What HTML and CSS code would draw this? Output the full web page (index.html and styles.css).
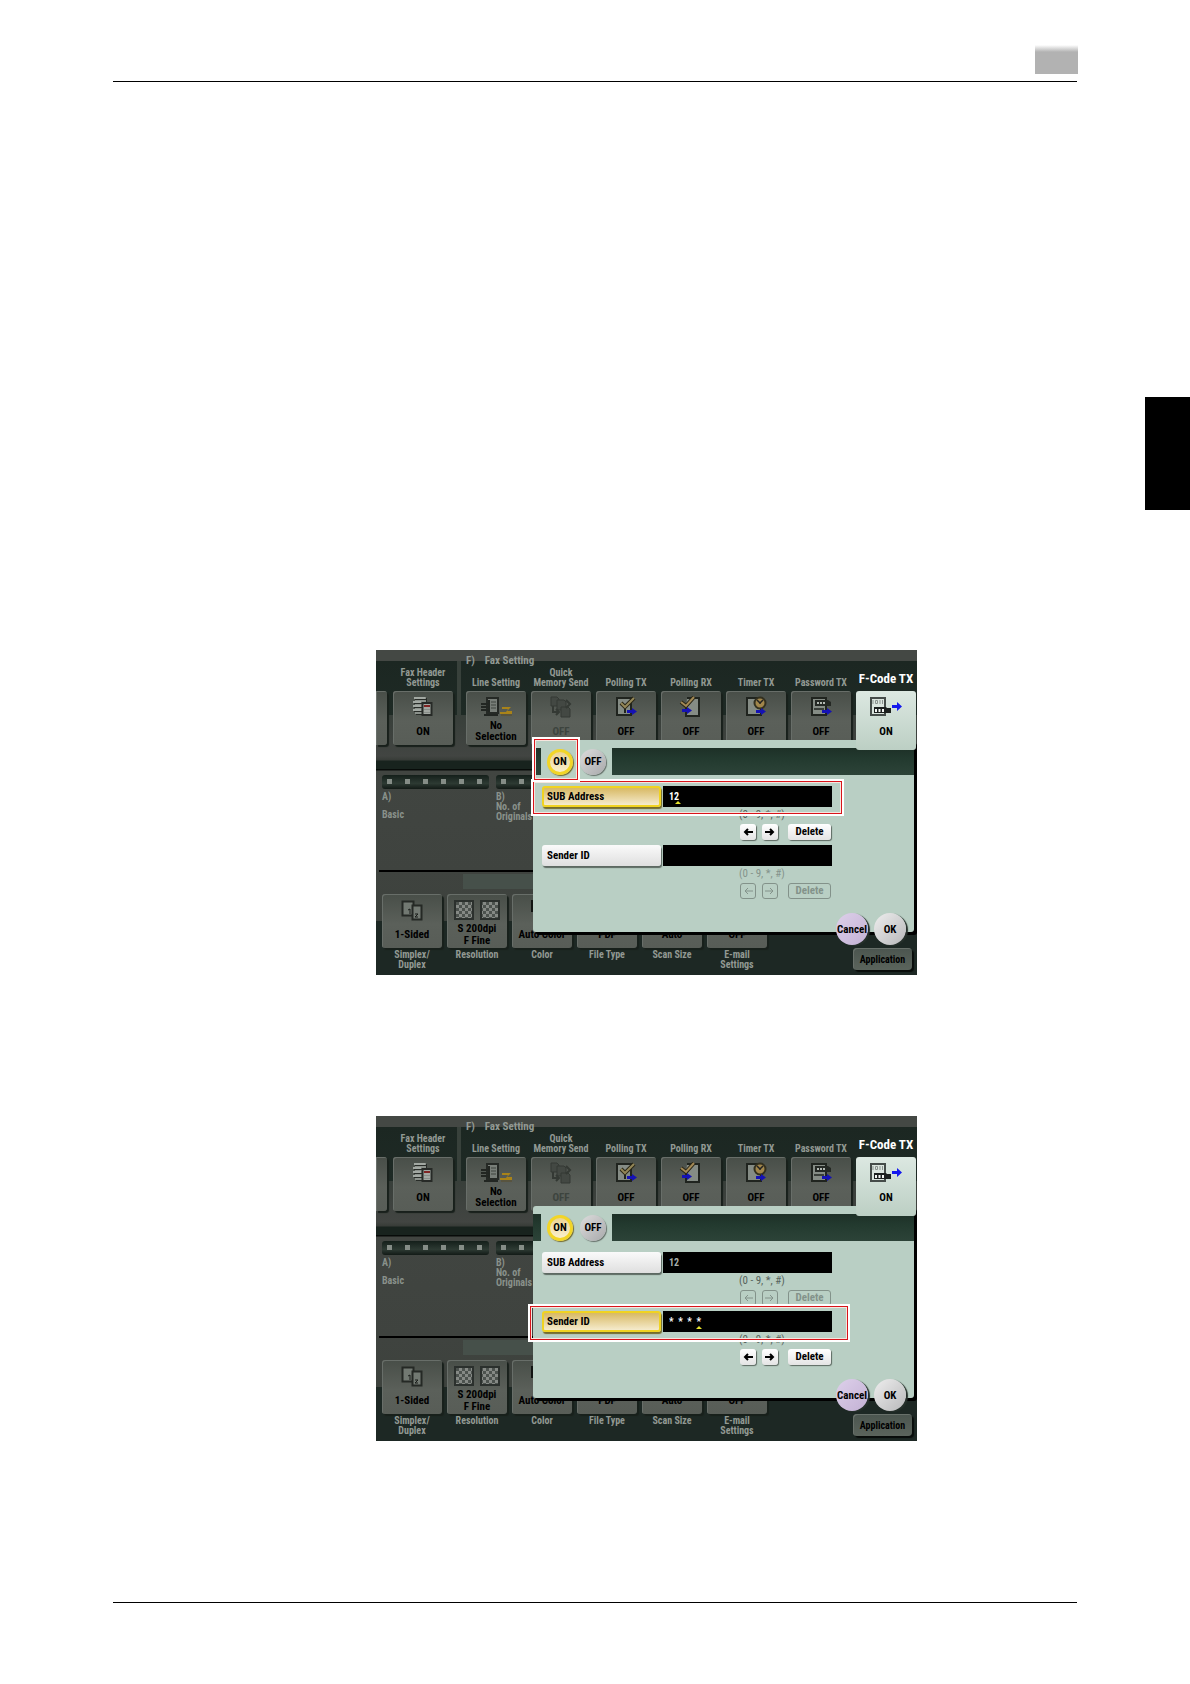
FILE: index.html
```html
<!DOCTYPE html>
<html lang="en">
<head>
<meta charset="utf-8">
<title>F-Code TX</title>
<meta name="viewport" content="width=device-width, initial-scale=1">
<link rel="stylesheet" href="styles.css">
</head>
<body>
<svg class="sprite" aria-hidden="true">
  <symbol id="i-arrow" viewBox="0 0 10 7"><path d="M0 2h5V0l5 3.5L5 7V5H0z" fill="#1512b4"/></symbol>
  <symbol id="i-header" viewBox="0 0 24 22">
    <path d="M4 1h11v17H4z" fill="#8b918b"/><path d="M3 2h11M2 6h8M2 10h8M2 14h8" stroke="#a2a8a2" stroke-width="2"/><path d="M4 3.500h11M3 7.500h8M3 11.500h8M3 15.500h8M5 18.500h6M15.500 2v4" stroke="#282c28"/>
    <path d="M11.500 7h9v12h-9z" fill="#a3a8a3" stroke="#272a27" stroke-width="2"/><path d="M13 10h6" stroke="#802423" stroke-width="2"/><path d="M13 13.500h6M13 16.500h6" stroke="#888d88"/>
  </symbol>
  <symbol id="i-line" viewBox="0 0 34 22">
    <path d="M8 2h11v15H8z" fill="#787e78" stroke="#252925" stroke-width="2"/><path d="M2 8h7M2 11h7M2 14h7M10 4v12" stroke="#222622" stroke-width="2"/><path d="M12 6h5M12 9h5M12 12h5" stroke="#3f443f"/><path d="M5 19h14" stroke="#222622" stroke-width="2"/>
    <path d="M23 11h9l-4 4h5v3H21v-2h6l2-3h-6z" fill="#a98319"/><path d="M22 19h11" stroke="#5b4d28"/>
  </symbol>
  <symbol id="i-memory" viewBox="0 0 24 22" fill="#434843" stroke="#343934">
    <path d="M2 1h6l2 2v7H2z"/><path d="M8 4h7l2 2v8H8z"/><path d="M12 11h7l2 2v8h-9z"/><path d="M17 4l4 4-4 4M4 10v6h5M7 13l3 3-3 3" fill="none" stroke-width="2"/>
  </symbol>
  <symbol id="i-polltx" viewBox="0 0 24 22">
    <path d="M3 2h14v17H3z" fill="#858c85" stroke="#20241f" stroke-width="2"/><path d="M7 7l4 4 9-9" fill="none" stroke="#292616" stroke-width="4"/><path d="M7 7l4 4 9-9" fill="none" stroke="#938657" stroke-width="2"/><path d="M11 13v4" stroke="#20241f" stroke-width="2"/>
    <use href="#i-arrow" x="13" y="12" width="10" height="7"/>
  </symbol>
  <symbol id="i-pollrx" viewBox="0 0 24 22">
    <path d="M8 2h12v18H7V12" fill="#858c85" stroke="#20241f" stroke-width="2"/><path d="M2 6l5 4 8-9" fill="none" stroke="#292616" stroke-width="4"/><path d="M2 6l5 4 8-9" fill="none" stroke="#a38955" stroke-width="2"/>
    <use href="#i-arrow" x="3" y="11" width="10" height="7"/>
  </symbol>
  <symbol id="i-timer" viewBox="0 0 24 22">
    <path d="M3 2h14v17H3z" fill="#858c85" stroke="#20241f" stroke-width="2"/><circle cx="16" cy="7" r="5.500" fill="#a1864b" stroke="#33301f" stroke-width="2"/><path d="M13 4l3 3 3-3M16 7v1" fill="none" stroke="#222" stroke-width="1.500"/>
    <use href="#i-arrow" x="12" y="12" width="10" height="7"/>
  </symbol>
  <symbol id="i-password" viewBox="0 0 24 22">
    <path d="M3 2h14v17H3z" fill="#858c85" stroke="#20241f" stroke-width="2"/><path d="M6 4h13l3 2v4H6z" fill="#242824"/><path d="M8 7h9" stroke="#b2b8b2" stroke-width="2" stroke-dasharray="2 1"/><path d="M5 13h10" stroke="#393e39" stroke-width="2"/>
    <use href="#i-arrow" x="13" y="12" width="10" height="7"/>
  </symbol>
  <symbol id="i-fcode" viewBox="0 0 34 22">
    <path d="M2 2h14v17H2z" fill="#dbe5de" stroke="#454c49" stroke-width="2"/><path d="M4 4v4M6.500 4.500h2v3h-2zM11 4v4M13.500 4v4" stroke="#8b938f" fill="none"/><path d="M5 11h12l1 1h4v5H5z" fill="#1c201f"/><path d="M6 14.500h10" stroke="#f4f6f4" stroke-width="3" stroke-dasharray="2 1.500"/>
    <path d="M23 9h5V6l5 4.500L28 15v-3h-5z" fill="#1418ee"/>
  </symbol>
  <symbol id="i-sided" viewBox="0 0 24 22">
    <path d="M2.500 2.500h11v14h-11z" fill="#727972" stroke="#252925" stroke-width="2"/><path d="M12.500 6.500h9v14h-9z" fill="#727972" stroke="#252925" stroke-width="2"/><path d="M8 11l2-1v5M15 15h3l-3 3h3" fill="none" stroke="#191d19"/>
  </symbol>
  <pattern id="checks" width="6" height="6" patternUnits="userSpaceOnUse"><path d="M0 0h6v6H0z" fill="#858985"/><path d="M0 0h3v3H0zM3 3h3v3H3z" fill="#4c524e"/></pattern>
  <symbol id="i-res" viewBox="0 0 48 22">
    <path d="M2 2h18v18H2zM28 2h18v18H28z" fill="url(#checks)" stroke="#2b302d" stroke-width="2"/>
  </symbol>
  <symbol id="i-color" viewBox="0 0 24 22"><path d="M1 1h20v12H1z" fill="#121512"/></symbol>
</svg>

<div class="page">
  <header class="page-head"><span class="page-mark"></span></header>
  <aside class="thumb-tab"></aside>

  <main class="figures">
    <section class="screen" aria-label="SUB Address">
      <div class="settings">
        <div class="group group-first">
          <button class="tile tile-cut" aria-label="Previous"></button>
          <div class="setting"><span class="cap">Fax Header<br>Settings</span><button class="tile"><svg class="ico"><use href="#i-header"/></svg><span class="val">ON</span></button></div>
        </div>
        <div class="group group-fax">
          <h2 class="group-title"><span>F)</span><span>Fax Setting</span></h2>
          <div class="setting"><span class="cap">Line Setting</span><button class="tile"><svg class="ico ico-wide"><use href="#i-line"/></svg><span class="val">No<br>Selection</span></button></div>
          <div class="setting"><span class="cap">Quick<br>Memory Send</span><button class="tile tile-dim"><svg class="ico"><use href="#i-memory"/></svg><span class="val">OFF</span></button></div>
          <div class="setting"><span class="cap">Polling TX</span><button class="tile"><svg class="ico"><use href="#i-polltx"/></svg><span class="val">OFF</span></button></div>
          <div class="setting"><span class="cap">Polling RX</span><button class="tile"><svg class="ico"><use href="#i-pollrx"/></svg><span class="val">OFF</span></button></div>
          <div class="setting"><span class="cap">Timer TX</span><button class="tile"><svg class="ico"><use href="#i-timer"/></svg><span class="val">OFF</span></button></div>
          <div class="setting"><span class="cap">Password TX</span><button class="tile"><svg class="ico"><use href="#i-password"/></svg><span class="val">OFF</span></button></div>
          <div class="setting setting-active"><span class="cap">F-Code TX</span><button class="tile"><svg class="ico ico-wide"><use href="#i-fcode"/></svg><span class="val">ON</span></button></div>
        </div>
      </div>
      <div class="originals">
        <div class="original"><div class="rail"></div><p>A)</p><p class="low">Basic</p></div>
        <div class="original"><div class="rail"></div><p>B)<br>No. of<br>Originals</p></div>
      </div>
      <div class="scan">
        <div class="setting"><button class="tile"><svg class="ico"><use href="#i-sided"/></svg><span class="val">1-Sided</span></button><span class="cap">Simplex/<br>Duplex</span></div>
        <div class="setting"><button class="tile"><svg class="ico ico-pair"><use href="#i-res"/></svg><span class="val">S 200dpi<br>F Fine</span></button><span class="cap">Resolution</span></div>
        <div class="setting"><button class="tile"><svg class="ico"><use href="#i-color"/></svg><span class="val">Auto Color</span></button><span class="cap">Color</span></div>
        <div class="setting"><button class="tile"><span class="ico"></span><span class="val">PDF</span></button><span class="cap">File Type</span></div>
        <div class="setting"><button class="tile"><span class="ico"></span><span class="val">Auto</span></button><span class="cap">Scan Size</span></div>
        <div class="setting"><button class="tile"><span class="ico"></span><span class="val">OFF</span></button><span class="cap">E-mail<br>Settings</span></div>
        <button class="application">Application</button>
      </div>

      <div class="dialog">
        <div class="switch"><div class="switch-tab"><button class="round selected">ON</button><button class="round">OFF</button></div></div>
        <div class="entry">
          <button class="name selected" id="sub-1">SUB Address</button>
          <input class="field" type="text" value="12" aria-labelledby="sub-1">
          <i class="caret"></i>
          <div class="edit"><span class="hint">(0 - 9, *, #)</span><div class="keys"><button class="key" aria-label="Left"><svg viewBox="0 0 10 8"><path d="M10 4H2M5 1L2 4l3 3"/></svg></button><button class="key" aria-label="Right"><svg viewBox="0 0 10 8"><path d="M0 4h8M5 1l3 3-3 3"/></svg></button><button class="key key-delete">Delete</button></div></div>
        </div>
        <div class="entry entry-off">
          <button class="name" id="sender-1">Sender ID</button>
          <input class="field" type="text" value="" aria-labelledby="sender-1">
          <div class="edit"><span class="hint">(0 - 9, *, #)</span><div class="keys"><button class="key" disabled aria-label="Left"><svg viewBox="0 0 10 8"><path d="M10 4H2M5 1L2 4l3 3"/></svg></button><button class="key" disabled aria-label="Right"><svg viewBox="0 0 10 8"><path d="M0 4h8M5 1l3 3-3 3"/></svg></button><button class="key key-delete" disabled>Delete</button></div></div>
        </div>
        <div class="actions"><button class="round cancel">Cancel</button><button class="round ok">OK</button></div>
      </div>
      <div class="mark mark-entry"></div>
      <div class="mark mark-on"></div>
    </section>

    <section class="screen" aria-label="Sender ID">
      <div class="settings">
        <div class="group group-first">
          <button class="tile tile-cut" aria-label="Previous"></button>
          <div class="setting"><span class="cap">Fax Header<br>Settings</span><button class="tile"><svg class="ico"><use href="#i-header"/></svg><span class="val">ON</span></button></div>
        </div>
        <div class="group group-fax">
          <h2 class="group-title"><span>F)</span><span>Fax Setting</span></h2>
          <div class="setting"><span class="cap">Line Setting</span><button class="tile"><svg class="ico ico-wide"><use href="#i-line"/></svg><span class="val">No<br>Selection</span></button></div>
          <div class="setting"><span class="cap">Quick<br>Memory Send</span><button class="tile tile-dim"><svg class="ico"><use href="#i-memory"/></svg><span class="val">OFF</span></button></div>
          <div class="setting"><span class="cap">Polling TX</span><button class="tile"><svg class="ico"><use href="#i-polltx"/></svg><span class="val">OFF</span></button></div>
          <div class="setting"><span class="cap">Polling RX</span><button class="tile"><svg class="ico"><use href="#i-pollrx"/></svg><span class="val">OFF</span></button></div>
          <div class="setting"><span class="cap">Timer TX</span><button class="tile"><svg class="ico"><use href="#i-timer"/></svg><span class="val">OFF</span></button></div>
          <div class="setting"><span class="cap">Password TX</span><button class="tile"><svg class="ico"><use href="#i-password"/></svg><span class="val">OFF</span></button></div>
          <div class="setting setting-active"><span class="cap">F-Code TX</span><button class="tile"><svg class="ico ico-wide"><use href="#i-fcode"/></svg><span class="val">ON</span></button></div>
        </div>
      </div>
      <div class="originals">
        <div class="original"><div class="rail"></div><p>A)</p><p class="low">Basic</p></div>
        <div class="original"><div class="rail"></div><p>B)<br>No. of<br>Originals</p></div>
      </div>
      <div class="scan">
        <div class="setting"><button class="tile"><svg class="ico"><use href="#i-sided"/></svg><span class="val">1-Sided</span></button><span class="cap">Simplex/<br>Duplex</span></div>
        <div class="setting"><button class="tile"><svg class="ico ico-pair"><use href="#i-res"/></svg><span class="val">S 200dpi<br>F Fine</span></button><span class="cap">Resolution</span></div>
        <div class="setting"><button class="tile"><svg class="ico"><use href="#i-color"/></svg><span class="val">Auto Color</span></button><span class="cap">Color</span></div>
        <div class="setting"><button class="tile"><span class="ico"></span><span class="val">PDF</span></button><span class="cap">File Type</span></div>
        <div class="setting"><button class="tile"><span class="ico"></span><span class="val">Auto</span></button><span class="cap">Scan Size</span></div>
        <div class="setting"><button class="tile"><span class="ico"></span><span class="val">OFF</span></button><span class="cap">E-mail<br>Settings</span></div>
        <button class="application">Application</button>
      </div>

      <div class="dialog">
        <div class="switch"><div class="switch-tab"><button class="round selected">ON</button><button class="round">OFF</button></div></div>
        <div class="entry entry-idle">
          <button class="name" id="sub-2">SUB Address</button>
          <input class="field" type="text" value="12" aria-labelledby="sub-2">
          <div class="edit"><span class="hint">(0 - 9, *, #)</span><div class="keys"><button class="key" disabled aria-label="Left"><svg viewBox="0 0 10 8"><path d="M10 4H2M5 1L2 4l3 3"/></svg></button><button class="key" disabled aria-label="Right"><svg viewBox="0 0 10 8"><path d="M0 4h8M5 1l3 3-3 3"/></svg></button><button class="key key-delete" disabled>Delete</button></div></div>
        </div>
        <div class="entry entry-masked">
          <button class="name selected" id="sender-2">Sender ID</button>
          <input class="field" type="text" value="*  *  *  *" aria-labelledby="sender-2">
          <i class="caret"></i>
          <div class="edit"><span class="hint">(0 - 9, *, #)</span><div class="keys"><button class="key" aria-label="Left"><svg viewBox="0 0 10 8"><path d="M10 4H2M5 1L2 4l3 3"/></svg></button><button class="key" aria-label="Right"><svg viewBox="0 0 10 8"><path d="M0 4h8M5 1l3 3-3 3"/></svg></button><button class="key key-delete">Delete</button></div></div>
        </div>
        <div class="actions"><button class="round cancel">Cancel</button><button class="round ok">OK</button></div>
      </div>
      <div class="mark mark-sender"></div>
    </section>
  </main>
  <footer class="page-foot"></footer>
</div>
</body>
</html>
```
FILE: styles.css
```css
* { box-sizing: border-box; }
body { margin: 0; background: #fff; }
button, input { font: inherit; border: 0; padding: 0; margin: 0; color: inherit; }
p, h2 { margin: 0; font: inherit; }
.sprite { position: absolute; width: 0; height: 0; }

/* printed page */
.page { position: relative; padding: 45px 113px 81px 113px; }
.page-head { display: flex; justify-content: flex-end; height: 37px; border-bottom: 1px solid #000; }
.page-mark { width: 43px; height: 29px; margin-right: -1px; background: linear-gradient(#fff, #b2b2b2 7px); }
.thumb-tab { position: absolute; top: 397px; right: 0; width: 45px; height: 113px; background: #000; }
.figures { display: flex; flex-direction: column; gap: 141px; padding: 568px 0 161px 263px; }
.page-foot { border-top: 1px solid #000; }

/* panel screen */
.screen {
  position: relative; width: 100%; max-width: 541px; height: 325px; overflow: hidden;
  font: bold 11px/11px "Roboto Condensed", Roboto, "Liberation Sans", sans-serif;
  color: #000; white-space: nowrap;
  background:
    linear-gradient(#000, #000) 3px 220px / 100% 2px no-repeat,
    linear-gradient(#46504a, #46504a) 87px 224px / 100% 15px no-repeat,
    linear-gradient(#444844 11px, #1c2722 11px, #1e2a25 65px, #383f3a 65px, #424542 106px, #383c38 110px, #18231e 111px, #18231e 119px, #070b09 119px, #070b09 120px, #414541 121px, #3f433f 221px, #3d423d 271px, #1d2824 271px);
}
.settings { display: flex; gap: 13px; }
.group { display: flex; gap: 5px; padding-top: 17px; }
.group-first { gap: 6px; align-items: flex-end; }
.group-fax { position: relative; }
.group-fax::before { content: ""; position: absolute; top: 11px; left: -9px; width: 4px; height: 54px; background: #38413b; }
.group-title { position: absolute; top: 5px; left: 0; display: flex; gap: 10px; font-weight: bold; line-height: 12px; color: #929993; }
.setting { display: flex; flex-direction: column; flex: none; width: 60px; }
.cap { display: grid; align-content: end; justify-content: center; height: 24px; padding-bottom: 3px; font-size: 10px; line-height: 10px; text-align: center; color: #929993; }
.tile {
  display: flex; flex-direction: column; align-items: center; flex: none; width: 60px; height: 54px; padding-top: 5px;
  border-radius: 3px; background: linear-gradient(#484e48, #5b605a 30px, #585d57);
  box-shadow: inset 1px 1px #686e69, 2px 2px 1px #18201b; line-height: 11px;
}
.tile-cut { width: 11px; border-radius: 0 3px 3px 0; }
.ico { flex: none; width: 24px; height: 22px; }
.ico-wide { width: 34px; }
.ico-pair { width: 48px; }
.val { display: grid; align-content: center; flex: 1; padding-bottom: 1px; }
.tile-dim { color: #3d443e; }
.setting-active { position: relative; z-index: 2; }
.setting-active .cap { color: #fff; font-size: 13px; line-height: 18px; }
.setting-active .tile { height: 59px; padding-bottom: 5px; background: linear-gradient(#dce8e1, #bccfc4); box-shadow: none; margin-bottom: -5px; }

.originals { display: flex; gap: 7px; height: 149px; padding: 30px 0 0 6px; color: #89918b; font-size: 10px; line-height: 10px; }
.original { width: 107px; }
.rail { height: 14px; margin-bottom: 3px; border-radius: 3px; background: repeating-linear-gradient(90deg, transparent 0 5px, #858d87 5px 10px, transparent 10px 18px) 0 4px / 100% 5px no-repeat, linear-gradient(#141f1a, #2d3a33 60%, #121a16); }
.low { margin-top: 8px; }

.scan { display: flex; gap: 5px; height: 81px; padding: 0 5px 5px 6px; }
.scan .cap { display: block; height: auto; padding: 2px 0 0; }
.scan .val { line-height: 12px; padding: 0; }
.application { width: 59px; height: 22px; margin-left: auto; align-self: flex-end; flex: none; border-radius: 4px; background: linear-gradient(#4b554f, #5b645c); box-shadow: inset 1px 1px #68706a, 2px 2px 1px #080c0a; font-size: 10px; }

/* F-code dialog */
.dialog { position: absolute; top: 90px; left: 157px; width: 381px; height: 192px; padding-top: 8px; border-radius: 3px; background: #b9cfc4; box-shadow: 3px 3px #000; }
.switch { height: 27px; margin-bottom: 11px; padding-left: 8px; background: linear-gradient(#1d3027, #233a2f 11px, #2c4338); }
.switch-tab { display: flex; align-items: center; gap: 7px; width: 71px; height: 27px; padding-left: 6px; background: #b9cfc4; }
.round { flex: none; width: 26px; height: 26px; border-radius: 50%; background: linear-gradient(135deg, #dcdcdc, #a9a9ab); box-shadow: 1px 1px 1px #66706a; }
.round.selected { border: 3px solid #f2d527; background: linear-gradient(#ecd493, #f9efcd); box-shadow: 1px 1px 1px #736a2a; }
.entry { position: relative; display: grid; grid-template-columns: 119px 169px; column-gap: 2px; height: 59px; align-content: start; margin-left: 9px; }
.name { width: 119px; height: 21px; padding-left: 5px; border-radius: 3px; text-align: left; background: linear-gradient(#fafafa, #dfdfdf); box-shadow: 1px 2px 1px #5d6962; }
.name.selected { padding-left: 3px; border: 2px solid #f0d321; background: linear-gradient(#d8b964, #f5ebcd); box-shadow: 1px 2px 1px #756c2c; }
.field { width: 100%; height: 21px; padding: 0 6px; border-radius: 0; background: #000; color: #fff; font-size: 10px; }
.entry-idle .field { color: #a9afac; }
.entry-masked .field { white-space: pre; }
.caret { position: absolute; top: 15px; left: 133px; border: 3px solid transparent; border-top: 0; border-bottom-color: #e6e32d; }
.entry-masked .caret { left: 154px; }
.edit { grid-column: 2; justify-self: end; width: 93px; }
.hint { display: block; height: 17px; padding-top: 2px; font-weight: normal; color: #55625b; }
.entry-off .hint { color: #84938b; }
.keys { display: grid; grid-template-columns: 16px 16px 43px; column-gap: 6px; padding-left: 1px; }
.key { height: 16px; border-radius: 3px; background: linear-gradient(#fff, #e4e4e4); box-shadow: 1px 1px 1px #5d6962; line-height: 14px; }
.key-delete { margin-left: 4px; width: 43px; }
.key svg { display: block; width: 10px; height: 8px; margin: 0 auto; fill: none; stroke: currentColor; stroke-width: 2; }
.key:disabled { border: 1px solid #83928a; background: none; box-shadow: none; color: #83928a; }
.key:disabled svg { stroke-width: 1; }
.actions { position: absolute; right: 8px; bottom: -13px; display: flex; gap: 6px; }
.actions .round { width: 32px; height: 32px; background: linear-gradient(135deg, #eee, #b8b8ba); box-shadow: 2px 1px 1px #26302b; }
.actions .cancel { background: linear-gradient(135deg, #ddd0ea, #c3b1d4); }

/* callout frames */
.mark { position: absolute; z-index: 3; border: 2px solid #fff; outline: 1px solid #d8141a; outline-offset: -3px; box-shadow: inset 0 0 0 2px #f6e6de; }
.mark-on { top: 87px; left: 156px; width: 48px; height: 45px; }
.mark-entry { top: 129px; left: 155px; width: 313px; height: 37px; }
.mark-sender { top: 188px; left: 152px; width: 322px; height: 38px; }
```
